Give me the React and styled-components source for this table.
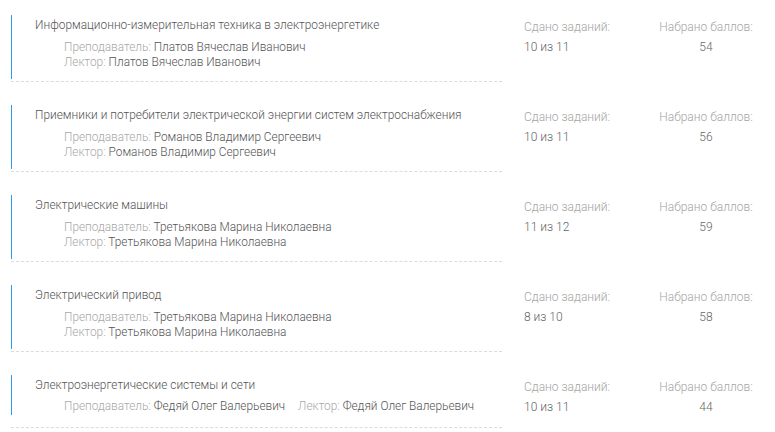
import React from "react";
import styled, { createGlobalStyle } from "styled-components";

const Global = createGlobalStyle`
  html, body { margin: 0; padding: 0; background: #fff; }
  body { font-family: Roboto, "Noto Sans", sans-serif; font-weight: 300; -webkit-font-smoothing: antialiased; }
`;

const List = styled.div`
  padding: 15px 11px 0 11px;
  display: flex;
  flex-direction: column;
  gap: 23px;
`;

const Item = styled.div`
  display: flex;
  align-items: flex-start;
`;

const Main = styled.div`
  width: 491px;
  flex: none;
  padding-bottom: ${(p) => (p.$compact ? "12px" : "2px")};
  border-bottom: 1px dashed #dcdcdc;
`;

const Info = styled.div`
  border-left: 1px solid #2a9cf0;
  padding: 3px 0 0 23px;
  height: ${(p) => (p.$compact ? "37px" : "61px")};
`;

const Title = styled.div`
  font-size: 11.9px;
  line-height: 14px;
  color: #555;
`;

const Teachers = styled.div`
  margin-top: ${(p) => (p.$compact ? "7px" : "8px")};
  padding-left: 29px;
  display: flex;
  flex-direction: ${(p) => (p.$compact ? "row" : "column")};
  gap: ${(p) => (p.$compact ? "13px" : "0")};
`;

const Person = styled.div`
  font-size: 11.85px;
  line-height: 15px;
  color: #555;
  white-space: nowrap;
`;

const Role = styled.span`
  color: #a8a8a8;
`;

const Stat = styled.div`
  flex: none;
  width: ${(p) => p.$w}px;
  margin-left: ${(p) => p.$ml || 0}px;
  text-align: ${(p) => p.$align || "left"};
  padding-top: 3px;
  font-size: 12px;
`;

const StatLabel = styled.div`
  color: #a5a5a5;
  line-height: 18px;
`;

const StatValue = styled.div`
  color: #666;
  line-height: 18px;
  margin-top: 2px;
`;

const rows = [
  {
    title: "Информационно-измерительная техника в электроэнергетике",
    t: "Платов Вячеслав Иванович",
    l: "Платов Вячеслав Иванович",
    done: "10 из 11",
    score: "54",
  },
  {
    title: "Приемники и потребители электрической энергии систем электроснабжения",
    t: "Романов Владимир Сергеевич",
    l: "Романов Владимир Сергеевич",
    done: "10 из 11",
    score: "56",
  },
  {
    title: "Электрические машины",
    t: "Третьякова Марина Николаевна",
    l: "Третьякова Марина Николаевна",
    done: "11 из 12",
    score: "59",
  },
  {
    title: "Электрический привод",
    t: "Третьякова Марина Николаевна",
    l: "Третьякова Марина Николаевна",
    done: "8 из 10",
    score: "58",
  },
  {
    title: "Электроэнергетические системы и сети",
    t: "Федяй Олег Валерьевич",
    l: "Федяй Олег Валерьевич",
    done: "10 из 11",
    score: "44",
    compact: true,
  },
];

export default function App() {
  return (
    <>
      <Global />
      <List>
        {rows.map((r, i) => (
          <Item key={i}>
            <Main $compact={r.compact}>
              <Info $compact={r.compact}>
                <Title>{r.title}</Title>
                <Teachers $compact={r.compact}>
                  <Person>
                    <Role>Преподаватель:</Role> {r.t}
                  </Person>
                  <Person>
                    <Role>Лектор:</Role> {r.l}
                  </Person>
                </Teachers>
              </Info>
            </Main>
            <Stat $w={124} $ml={22}>
              <StatLabel>Сдано заданий:</StatLabel>
              <StatValue>{r.done}</StatValue>
            </Stat>
            <Stat $w={116} $align="center">
              <StatLabel>Набрано баллов:</StatLabel>
              <StatValue>{r.score}</StatValue>
            </Stat>
          </Item>
        ))}
      </List>
    </>
  );
}
